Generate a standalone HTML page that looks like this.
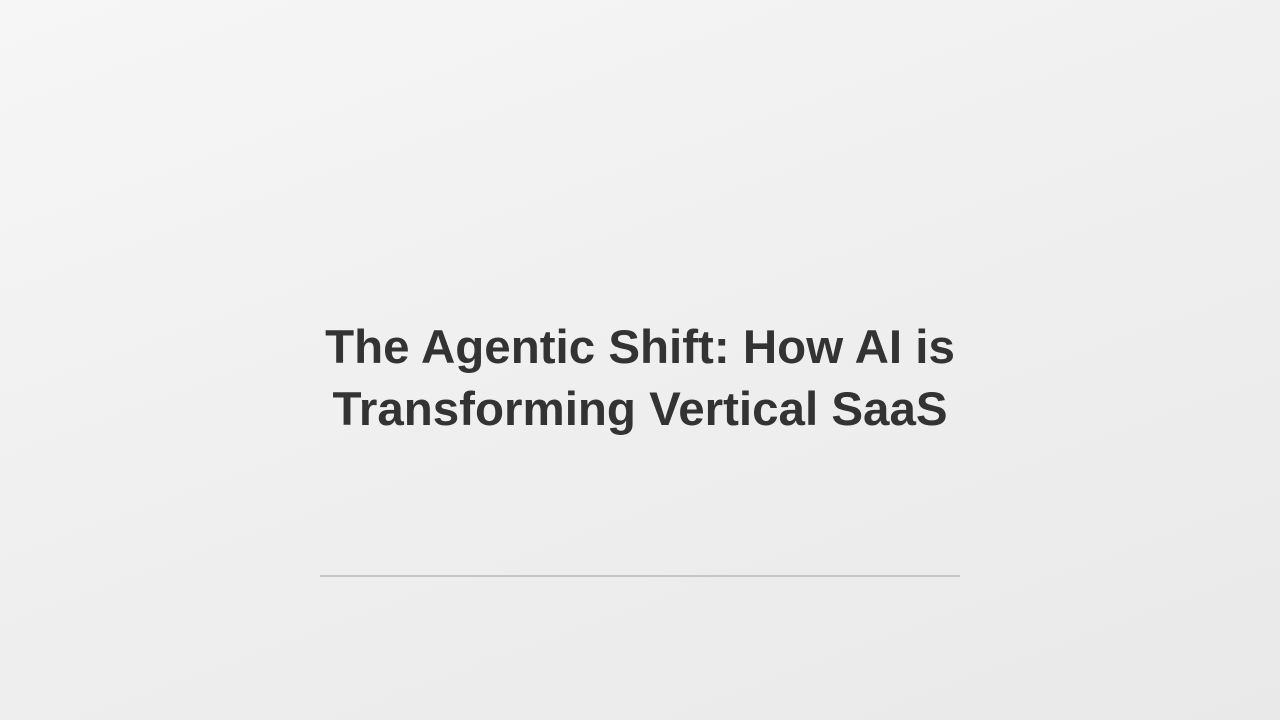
<!DOCTYPE html>
<html><head><meta charset="utf-8"><style>
html,body{margin:0;padding:0;}
body{width:1280px;height:720px;overflow:hidden;background:linear-gradient(160deg,#f6f6f6 0%,#efefef 50%,#e9e9e9 100%);position:relative;font-family:"Liberation Sans",Arial,sans-serif;}
h1{position:absolute;left:0;width:1280px;top:317px;margin:0;text-align:center;font-size:47.5px;line-height:62px;font-weight:bold;color:#333;}
.line{position:absolute;left:320px;top:575px;width:640px;height:2px;background:#c6c6c6;}
</style></head><body>
<h1>The Agentic Shift: How AI is<br>Transforming Vertical SaaS</h1>
<div class="line"></div>
</body></html>
